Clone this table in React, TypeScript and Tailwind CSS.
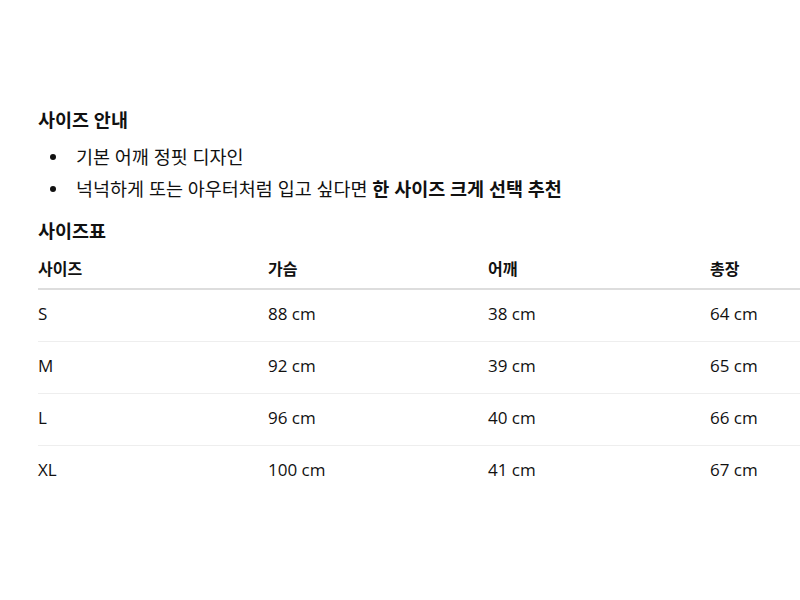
import React from "react";

const rows = [
  ["S", "88 cm", "38 cm", "64 cm"],
  ["M", "92 cm", "39 cm", "65 cm"],
  ["L", "96 cm", "40 cm", "66 cm"],
  ["XL", "100 cm", "41 cm", "67 cm"],
];

function Bullet({ children }: { children: React.ReactNode }) {
  return (
    <li className="flex items-center">
      <span className="ml-[12px] mr-[20px] h-[6px] w-[6px] shrink-0 rounded-full bg-[#111]" />
      <span>{children}</span>
    </li>
  );
}

export default function App() {
  return (
    <div
      className="w-[800px] h-[600px] overflow-hidden bg-white text-[#111]"
      style={{ fontFamily: '"Open Sans", "Noto Sans CJK KR", sans-serif' }}
    >
      <div className="pl-[38px] pt-[108px] w-[918px]">
        <h2 className="text-[18.5px] font-bold leading-6">사이즈 안내</h2>
        <ul className="mt-[9px] text-[18.5px] leading-8">
          <Bullet>기본 어깨 정핏 디자인</Bullet>
          <Bullet>
            넉넉하게 또는 아우터처럼 입고 싶다면{" "}
            <strong className="font-bold">한 사이즈 크게 선택 추천</strong>
          </Bullet>
        </ul>
        <h2 className="mt-[14px] text-[18.5px] font-bold leading-6">사이즈표</h2>
        <div className="mt-[7px] w-[880px]">
          <div className="grid grid-cols-[230px_220px_222px_208px] border-b-2 border-[#dddddd] text-[16px] font-bold leading-6 pt-[7px] pb-[7px]">
            <div>사이즈</div>
            <div>가슴</div>
            <div>어깨</div>
            <div>총장</div>
          </div>
          {rows.map((r, i) => (
            <div
              key={r[0]}
              className={
                "grid grid-cols-[230px_220px_222px_208px] text-[17px] leading-6 pt-[12px] pb-[15px] " +
                (i < rows.length - 1 ? "border-b border-[#eeeeee]" : "")
              }
            >
              {r.map((c, j) => (
                <div key={j}>{c}</div>
              ))}
            </div>
          ))}
        </div>
      </div>
    </div>
  );
}
